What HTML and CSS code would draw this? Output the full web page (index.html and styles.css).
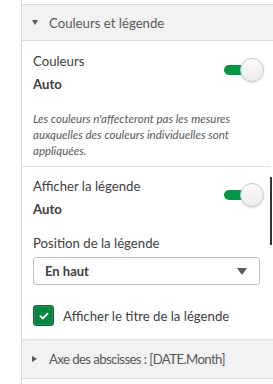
FILE: index.html
```html
<!DOCTYPE html>
<html>
<head>
<meta charset="utf-8">
<link rel="stylesheet" href="styles.css">
</head>
<body>
<div class="layout">
  <div class="strip"></div>
  <div class="panel">
    <div class="prev"></div>
    <div class="head open"><span class="caret-down"></span><span>Couleurs et légende</span></div>
    <div class="group first">
      <div class="row">
        <div class="labels">
          <div class="label">Couleurs</div>
          <div class="value">Auto</div>
        </div>
        <div class="toggle"><span class="track"></span><span class="knob"></span></div>
      </div>
      <p class="note">Les couleurs n'affecteront pas les mesures auxquelles des couleurs individuelles sont appliquées.</p>
    </div>
    <div class="group second">
      <div class="row">
        <div class="labels">
          <div class="label">Afficher la légende</div>
          <div class="value">Auto</div>
        </div>
        <div class="toggle"><span class="track"></span><span class="knob"></span></div>
      </div>
      <div class="label pos">Position de la légende</div>
      <div class="select"><span>En haut</span><span class="arrow"></span></div>
      <label class="check">
        <span class="box"><svg width="10" height="8" viewBox="0 0 10 8"><path d="M1.5 4.2 L3.9 6.4 L8.5 1.6" fill="none" stroke="#fff" stroke-width="2" stroke-linecap="round" stroke-linejoin="round"/></svg></span>
        <span>Afficher le titre de la légende</span>
      </label>
    </div>
    <div class="head closed"><span class="caret-right"></span><span class="tight">Axe des abscisses : [DATE.Month]</span></div>
    <div class="scrollbar"></div>
  </div>
</div>
</body>
</html>
```
FILE: styles.css
```css
* { box-sizing: border-box; }
html, body { margin: 0; padding: 0; background: #fff; }
body {
  width: 273px; height: 384px; overflow: hidden;
  font-family: "Source Sans Pro", Lato, "Noto Sans", sans-serif;
  font-size: 13px; color: #404040;
}
.layout { display: flex; height: 384px; }
.strip { width: 22px; flex: none; border-right: 1px solid #d9d9d9; }
.panel { flex: 1; position: relative; }
.prev { height: 5px; border-bottom: 1px solid #dcdcdc; }
.head {
  display: flex; align-items: center;
  background: #f2f2f2; border-bottom: 1px solid #dcdcdc;
  padding-left: 10px; color: #595959; font-size: 13.2px;
}
.head.open { height: 36px; gap: 11px; }
.head.closed { height: 40px; border-top: 1px solid #dcdcdc; gap: 11px; }
.caret-down {
  width: 0; height: 0; border-left: 3.5px solid transparent; border-right: 3.5px solid transparent;
  border-top: 5px solid #595959;
}
.caret-right {
  width: 0; height: 0; border-top: 3.5px solid transparent; border-bottom: 3.5px solid transparent;
  border-left: 5px solid #595959; margin-right: 1px;
}
.tight { letter-spacing: -0.6px; }
.group { margin-right: 3px; padding: 0 8px 0 11px; }
.group.first { padding-top: 10px; padding-bottom: 7px; border-bottom: 1px solid #e0e0e0; }
.group.second { padding-top: 9px; padding-bottom: 13px; }
.row { display: flex; justify-content: space-between; align-items: flex-start; }
.label { line-height: 20px; font-size: 13.2px; }
.value { line-height: 20px; font-weight: bold; margin-top: 3px; font-size: 13.2px; }
.toggle { position: relative; width: 40px; height: 24px; margin-top: 7px; margin-right: -2px; }
.track {
  position: absolute; left: 0; top: 7px; width: 30px; height: 10px;
  border-radius: 5px; background: #009845;
}
.knob {
  position: absolute; right: 0; top: 0; width: 24px; height: 24px; border-radius: 50%;
  background: linear-gradient(#fafafa, #ececec); border: 1px solid #c8c8c8;
  box-shadow: 0 1px 2px rgba(0,0,0,0.15);
}
.note {
  margin: 17px 0 0; font-style: italic; font-size: 11.5px; line-height: 16px; color: #595959;
}
.pos { margin-top: 14px; }
.select {
  margin-top: 4px; height: 28px; border: 1px solid #bfbfbf; border-radius: 3px;
  display: flex; align-items: center; justify-content: space-between;
  padding: 0 12px 0 11px; font-weight: bold; font-size: 13px; color: #404040;
  margin-right: 2px;
}
.arrow {
  width: 0; height: 0; border-left: 5px solid transparent; border-right: 5px solid transparent;
  border-top: 7px solid #595959;
}
.check { display: flex; align-items: center; gap: 9px; margin-top: 20px; font-size: 13.2px; }
.box {
  width: 21px; height: 21px; border-radius: 3px; background: #00873d;
  border: 1px solid #1f5a3a; display: flex; align-items: center; justify-content: center;
  box-shadow: inset 0 0 0 1px #1a9a56;
}
.scrollbar {
  position: absolute; left: 248px; top: 177px; width: 2px; height: 68px; background: #333;
}
```
